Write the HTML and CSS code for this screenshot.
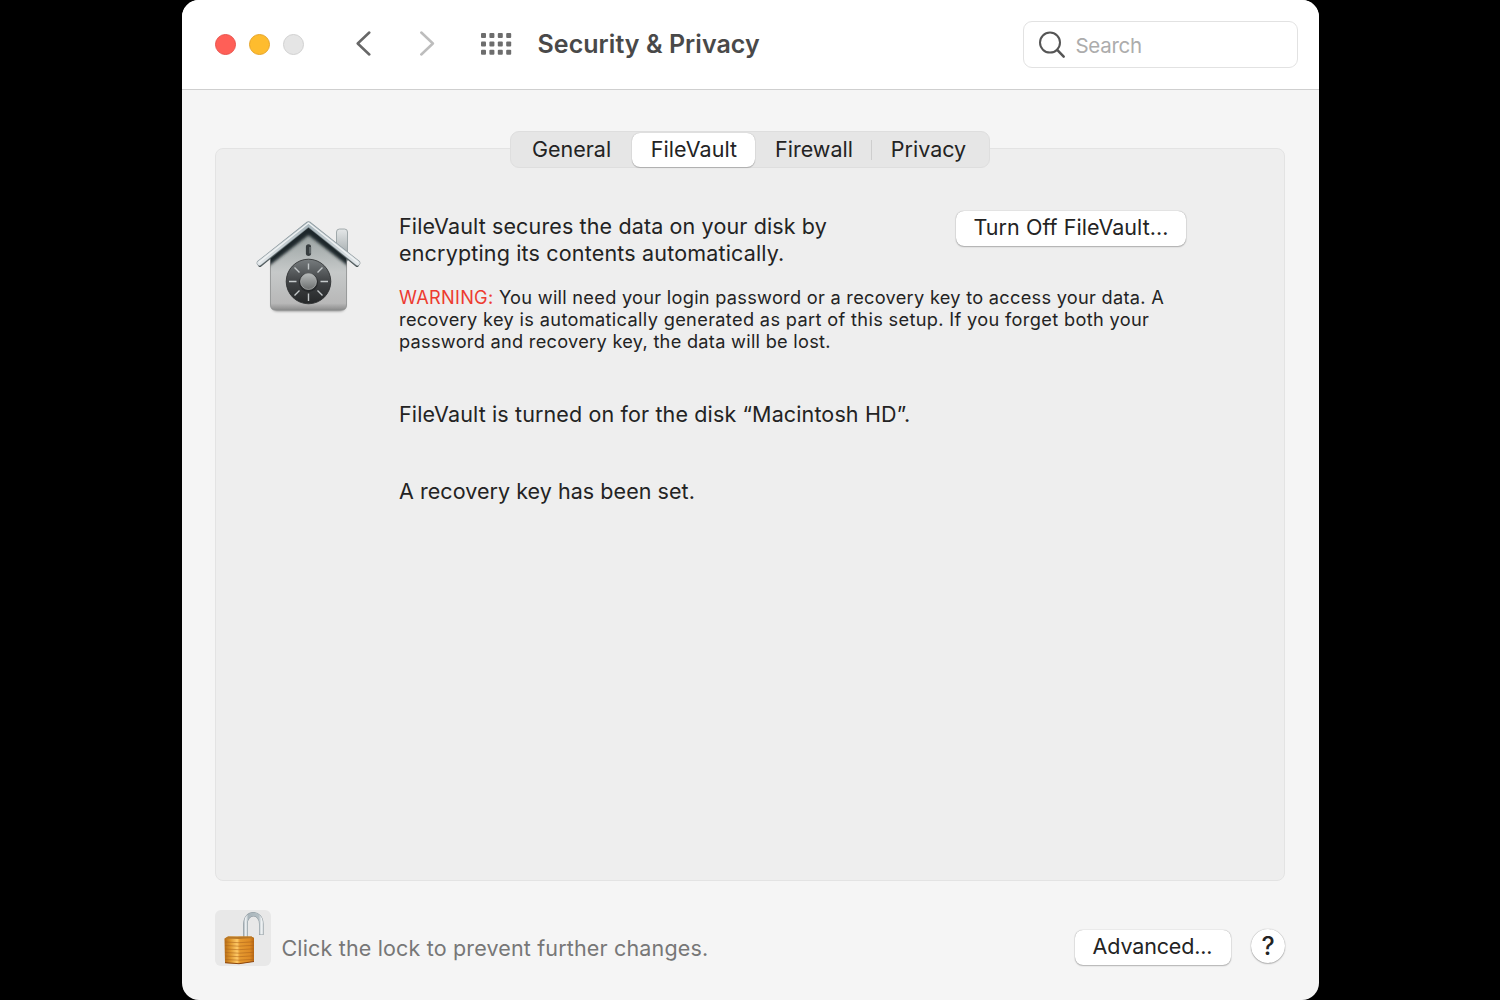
FILE: index.html
```
<!DOCTYPE html>
<html lang="en">
<head>
    <meta charset="utf-8">
    <title>Security &amp; Privacy</title>
    <link rel="stylesheet" href="styles.css">
</head>
<body>
    <div class="window">
        <header class="toolbar">
            <div class="lights">
                <span class="light close"></span>
                <span class="light minimize"></span>
                <span class="light disabled"></span>
            </div>
            <svg class="back" width="16" height="26" viewBox="0 0 16 26"><path d="M14.300 2.500 2.700 13.500 14.300 24.500"/></svg>
            <svg class="forward" width="16" height="26" viewBox="0 0 16 26"><path d="M2.300 2.500 13.900 13.500 2.300 24.500"/></svg>
            <svg class="grid-icon" width="31" height="23" viewBox="0 0 31 23">
                <g id="row">
                    <rect width="5" height="5" rx="1"/>
                    <rect x="8.4" width="5" height="5" rx="1"/>
                    <rect x="16.8" width="5" height="5" rx="1"/>
                    <rect x="25.2" width="5" height="5" rx="1"/>
                </g>
                <use href="#row" y="8.4"/>
                <use href="#row" y="16.8"/>
            </svg>
            <h1>Security &amp; Privacy</h1>
            <div class="search">
                <svg width="28" height="28" viewBox="0 0 28 28"><circle cx="12" cy="11.6" r="10"/><path d="m19.200 18.900 6.500 6.800" stroke-width="2.5"/></svg>
                <span>Search</span>
            </div>
        </header>

        <main>
            <nav class="tabs">
                <a class="tab general">General</a>
                <a class="tab active">FileVault</a>
                <a class="tab firewall">Firewall</a>
                <a class="tab privacy">Privacy</a>
            </nav>

            <section class="panel">
                <svg class="vault" width="112" height="104" viewBox="0 0 112 104">
                    <defs>
                        <linearGradient id="wall" x1="0" y1="0" x2="0" y2="1">
                            <stop offset="0" stop-color="#8f9998"/>
                            <stop offset=".55" stop-color="#c6c9c9"/>
                            <stop offset=".92" stop-color="#b8b8b8"/>
                            <stop offset="1" stop-color="#8c8c8c"/>
                        </linearGradient>
                        <linearGradient id="roof" x1="0" y1="0" x2="0" y2="1">
                            <stop offset="0" stop-color="#a9b7bd"/>
                            <stop offset="1" stop-color="#e1e6e9"/>
                        </linearGradient>
                        <linearGradient id="chimney" x1="0" y1="0" x2="0" y2="1">
                            <stop offset="0" stop-color="#e4e7e8"/>
                            <stop offset="1" stop-color="#949d9f"/>
                        </linearGradient>
                        <linearGradient id="dial" x1="0" y1="0" x2="0" y2="1">
                            <stop offset="0" stop-color="#777c7e"/>
                            <stop offset=".5" stop-color="#404345"/>
                            <stop offset="1" stop-color="#252728"/>
                        </linearGradient>
                        <linearGradient id="knob" x1="0" y1="0" x2="0" y2="1">
                            <stop offset="0" stop-color="#b6baba"/>
                            <stop offset="1" stop-color="#6d7070"/>
                        </linearGradient>
                        <clipPath id="wall-clip"><path d="M17.500 42 55.500 12 93.500 42V92q0 5-5 5h-66q-5 0-5-5Z"/></clipPath>
                        <filter id="soft"><feGaussianBlur stdDeviation="1.500"/></filter>
                    </defs>
                    <path d="M19 45H92V91q0 6-6 6H25q-6 0-6-6Z" fill="#000" opacity=".5" filter="url(#soft)"/>
                    <path d="M83.500 18q0-3 3-3h5q3 0 3 3v29l-11-10Z" fill="url(#chimney)" stroke="#8f999c" stroke-width=".8"/>
                    <path d="M17.500 42 55.500 12 93.500 42V91q0 5-5 5h-66q-5 0-5-5Z" fill="url(#wall)" stroke="#8b8e8e" stroke-width=".8"/>
                    <g clip-path="url(#wall-clip)">
                        <path d="M8 53 55.500 16 103 53" fill="none" stroke="#1c282a" stroke-width="8" filter="url(#soft)"/>
                    </g>
                    <path d="m7 51 48.500-40 48.500 40" class="roof-shadow"/>
                    <path d="M6.500 49 55.500 10 104.500 49" class="roof-edge"/>
                    <path d="M6.500 49 55.500 10 104.500 49" class="roof-fill"/>
                    <path d="M6.500 48 55.500 9 104.500 48" class="roof-shine"/>
                    <rect x="52.900" y="30.300" width="5.200" height="11.600" rx="2.600" fill="#373d3f"/>
                    <path d="M57 33v6.500" stroke="#8b9496"/>
                    <circle cx="55.500" cy="67.500" r="22.300" fill="url(#dial)" stroke="#272a2b" stroke-width=".8"/>
                    <path class="ticks" d="M55.500 49.500v6M55.500 79.500V87M36 67.500h7.500M67.500 67.500H75M41.500 53.500l5 5M64.500 76.500l5 5M69.500 53.500l-5 5M46.500 76.500l-5 5"/>
                    <circle cx="55.500" cy="68.500" r="9.500" fill="#202223" opacity=".7"/>
                    <circle cx="55.500" cy="67.500" r="8" fill="url(#knob)" stroke="#b0b3b3" stroke-width=".7"/>
                </svg>

                <div class="info">
                    <div class="intro">
                        <p class="body-text lead">FileVault secures the data on your disk by<br><span class="intro-end">encrypting its contents automatically.</span></p>
                        <button class="turn-off">Turn Off FileVault...</button>
                    </div>
                    <p class="warning"><span class="red">WARNING:</span> You will need your login password or a recovery key to access your data. A<br><span class="line-2">recovery key is automatically generated as part of this setup. If you forget both your</span><br>password and recovery key, the data will be lost.</p>
                    <p class="body-text status">FileVault is turned on for the disk “Macintosh HD”.</p>
                    <p class="body-text key">A recovery key has been set.</p>
                </div>
            </section>
        </main>

        <footer>
            <div class="lock">
                <svg width="56" height="56" viewBox="0 0 56 56">
                    <defs>
                        <linearGradient id="brass">
                            <stop offset="0" stop-color="#b56b16"/>
                            <stop offset=".2" stop-color="#df972d"/>
                            <stop offset=".43" stop-color="#ffca67"/>
                            <stop offset=".52" stop-color="#e69a30"/>
                            <stop offset=".85" stop-color="#de8b24"/>
                            <stop offset="1" stop-color="#b76512"/>
                        </linearGradient>
                        <linearGradient id="steel" gradientUnits="userSpaceOnUse" x1="28" y1="0" x2="49" y2="0">
                            <stop offset="0" stop-color="#8a989f"/>
                            <stop offset=".13" stop-color="#f2f5f7"/>
                            <stop offset=".25" stop-color="#a9b5bb"/>
                            <stop offset=".75" stop-color="#b4bfc4"/>
                            <stop offset=".9" stop-color="#f5f7f8"/>
                            <stop offset="1" stop-color="#a7b3b9"/>
                        </linearGradient>
                    </defs>
                    <path d="M30.500 28V14c0-13 15.800-13 15.800 0v11" fill="none" stroke="#8c989e" stroke-width="4.600"/>
                    <path d="M30.500 28V14c0-13 15.800-13 15.800 0v10.500" fill="none" stroke="url(#steel)" stroke-width="3.600"/>
                    <path d="M9.500 28.500 13 26.500h23.500l2.500 1.500v23.500l-15 2.500-14-1Z" fill="url(#brass)"/>
                    <path d="M10 28.500 13 26.500h23.500l2.500 1.500-15 .9Z" fill="#b87827"/>
                    <path d="m10 32 14 .7 15-.9M10 35.500l14 .7 15-.9M10 39l14 .7 15-.9M10 42.500l14 .7 15-.9M10 46l14 .7 15-.9M10 49.500l14 .7 15-.9" class="ridges"/>
                    <path d="m10 52.700 14 1 15-2.200" fill="none" stroke="#8b4610"/>
                </svg>
            </div>
            <span class="hint">Click the lock to prevent further changes.</span>
            <button class="advanced">Advanced...</button>
            <button class="help">?</button>
        </footer>
    </div>
</body>
</html>
```
FILE: styles.css
```
* {
    box-sizing: border-box;
}

body {
    margin: 0;
    height: 1000px;
    background: #000;
    font-family: Inter, "Liberation Sans", sans-serif;
    font-size: 21.5px;
    color: #232323;
    overflow: hidden;
}

h1, p {
    margin: 0;
}

.window {
    width: 1137px;
    height: 1000px;
    margin: 0 auto;
    background: #f5f5f5;
    border-radius: 17px;
    overflow: hidden;
    display: flex;
    flex-direction: column;
}

.toolbar {
    height: 90px;
    flex-shrink: 0;
    background: #fff;
    border-bottom: 1px solid #cfcfcf;
    display: flex;
    align-items: center;
    padding: 0 21px 0 33px;
}

.lights {
    display: flex;
    gap: 13px;
}

.light {
    width: 21px;
    height: 21px;
    border-radius: 50%;
    border: 1px solid #d1d1d1;
    background: #e5e5e5;
}

.close {
    background: #ff5f57;
    border-color: #e9544d;
}

.minimize {
    background: #febc2e;
    border-color: #e6a52b;
}

.back, .forward {
    fill: none;
    stroke: #676767;
    stroke-width: 2.5;
    stroke-linecap: round;
    stroke-linejoin: round;
}

.back {
    margin-left: 51px;
    margin-bottom: 3px;
}

.forward {
    margin-left: 48px;
    margin-bottom: 3px;
    stroke: #bdbdbd;
}

.grid-icon {
    margin-left: 46px;
    fill: #6d6d6d;
}

h1 {
    margin-left: 26px;
    margin-bottom: 2px;
    font-size: 25px;
    font-weight: 600;
    line-height: 30px;
    letter-spacing: .05px;
    color: #494949;
    white-space: nowrap;
}

.search {
    width: 275px;
    height: 47px;
    margin-left: auto;
    border: 1px solid #e2e2e2;
    border-radius: 9px;
    display: flex;
    align-items: center;
    padding-left: 14px;
    gap: 10px;
    color: #acacac;
    font-size: 20.5px;
    letter-spacing: -.3px;
}

.search svg {
    fill: none;
    stroke: #555;
    stroke-width: 2;
    stroke-linecap: round;
}

.search span {
    padding-top: 2px;
}

main {
    padding: 41px 33px 0;
    display: flex;
    flex-direction: column;
    align-items: center;
}

.tabs {
    width: 480px;
    height: 37px;
    margin-bottom: -20px;
    background: #e6e6e6;
    border: 1px solid #dedede;
    border-radius: 9px;
    display: flex;
    align-items: center;
    z-index: 1;
}

.tab {
    height: 35px;
    line-height: 35px;
    text-align: center;
    white-space: nowrap;
}

.general {
    width: 121px;
}

.active {
    width: 123px;
    height: 34px;
    line-height: 32px;
    padding-left: 1px;
    background: #fff;
    border-radius: 8px;
    letter-spacing: .1px;
    box-shadow: 0 0 1px rgba(0, 0, 0, .3), 0 1px 1px rgba(0, 0, 0, .2);
}

.firewall {
    width: 116px;
    padding-left: 2px;
}

.privacy {
    width: 118px;
    height: 20px;
    line-height: 18px;
    padding-right: 4px;
    border-left: 1px solid #cecece;
}

.panel {
    width: 1070px;
    height: 733px;
    background: #eee;
    border: 1px solid #e3e3e3;
    border-radius: 8px;
    display: flex;
    padding: 61px 0 0 37px;
}

.vault {
    flex-shrink: 0;
    margin-top: 4px;
}

.roof-shadow, .roof-edge, .roof-fill, .roof-shine {
    fill: none;
    stroke-linecap: round;
    stroke-linejoin: round;
}

.roof-shadow {
    stroke: #4c5557;
    stroke-width: 4;
}

.roof-edge {
    stroke: #849095;
    stroke-width: 5.5;
}

.roof-fill {
    stroke: url(#roof);
    stroke-width: 4.5;
}

.roof-shine {
    stroke: #eff2f3;
    stroke-width: 1.5;
}

.ticks {
    stroke: #c4c9ca;
    stroke-width: 1.4;
}

.info {
    margin-left: 34px;
    white-space: nowrap;
}

.intro {
    display: flex;
    align-items: flex-start;
    justify-content: space-between;
    width: 787px;
}

.body-text {
    line-height: 27px;
    padding-top: 2px;
    letter-spacing: .13px;
}

.lead {
    padding-top: 3px;
}

.intro-end {
    letter-spacing: .17px;
}

button {
    font-family: inherit;
    font-size: 21.5px;
    color: #232323;
    background: #fff;
    border: 0;
    border-radius: 8px;
    height: 35px;
    padding: 0 0 3px;
    box-shadow: 0 0 1px rgba(0, 0, 0, .4), 0 1px 1.5px rgba(0, 0, 0, .25);
}

.turn-off {
    width: 230px;
    margin-top: 1px;
    letter-spacing: .05px;
}

.warning {
    margin-top: 18.5px;
    font-size: 18.2px;
    line-height: 22px;
    letter-spacing: .28px;
}

.line-2 {
    letter-spacing: .34px;
}

.red {
    color: #ed3b30;
}

.status {
    margin-top: 47.5px;
}

.key {
    margin-top: 48px;
    letter-spacing: .05px;
}

footer {
    display: flex;
    align-items: flex-start;
    padding: 29px 34px 0 33px;
}

.lock {
    width: 56px;
    height: 56px;
    background: #e8e8e8;
    border-radius: 6px;
}

.ridges {
    fill: none;
    stroke: #a9611a;
    stroke-width: .9;
    opacity: .6;
}

.hint {
    margin: 25px 0 0 11px;
    line-height: 27px;
    letter-spacing: .16px;
    color: #777;
    white-space: nowrap;
}

.advanced {
    width: 156px;
    margin: 20px 20px 0 auto;
    letter-spacing: -.15px;
}

.help {
    width: 34px;
    height: 34px;
    margin-top: 19px;
    padding: 0 0 1px 1px;
    border-radius: 50%;
    font-size: 25px;
    font-weight: 500;
}
```
